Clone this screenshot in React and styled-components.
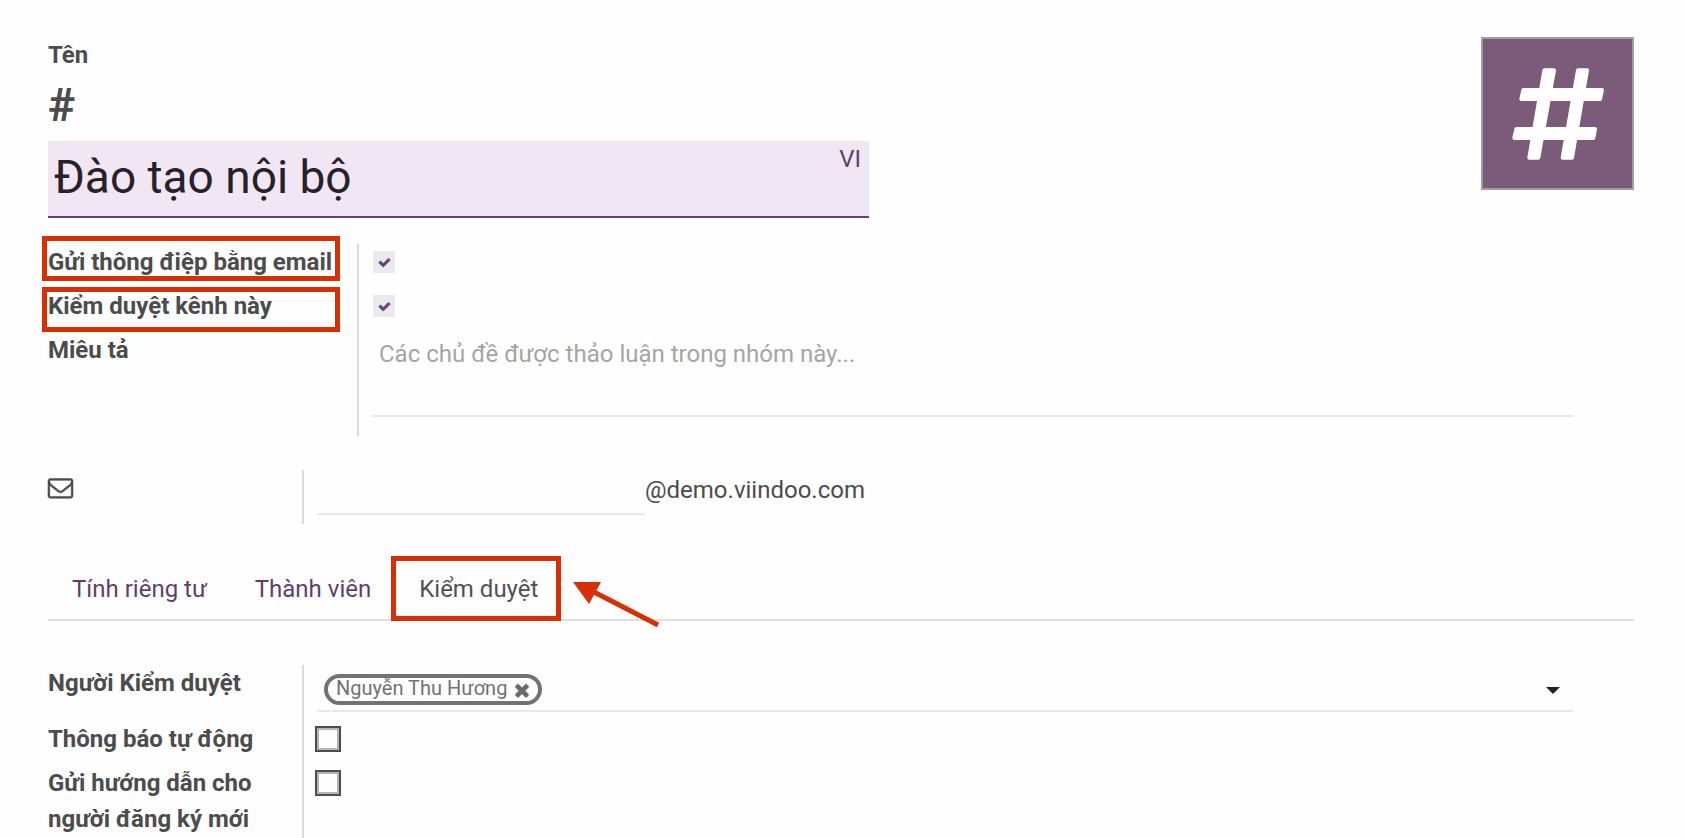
import React, { useState } from "react";
import styled, { createGlobalStyle, css } from "styled-components";

const GlobalStyle = createGlobalStyle`
  * {
    box-sizing: border-box;
  }
  body {
    margin: 0;
    background-color: #fefefe;
    color: #4c4c4c;
    font-family: Roboto, "Noto Sans", sans-serif;
    font-size: 24px;
    line-height: 36px;
  }
  input, textarea, button {
    font: inherit;
    color: inherit;
    border: none;
    border-radius: 0;
    background: none;
    padding: 0;
    margin: 0;
    outline: none;
  }
`;

const Page = styled.main`
  min-height: 100vh;
  padding: 37px 51px 0 48px;
  display: flex;
  flex-direction: column;
`;

const Header = styled.header`
  display: flex;
  justify-content: space-between;
  align-items: flex-start;
`;

const TitleBlock = styled.div`
  width: calc(50% + 28px);
  display: flex;
  flex-direction: column;
`;

const Label = styled.label`
  font-weight: bold;
`;

const Hash = styled.span`
  font-size: 46px;
  font-weight: bold;
  line-height: 64px;
  margin-bottom: 4px;
`;

const TitleField = styled.div`
  display: flex;
  align-items: flex-start;
  background-color: #f0e6f4;
  border-bottom: 2px solid #6b4079;
`;

const TitleInput = styled.input`
  flex: 1;
  min-width: 0;
  height: 75px;
  padding: 0 6px 4px;
  font-size: 46px;
  color: #262228;
`;

const LangButton = styled.button`
  padding: 0 8px;
  color: #5f3e6f;
  cursor: pointer;
`;

const Avatar = styled.svg`
  width: 153px;
  height: 153px;
  border: 2px solid #a09da2;
  background-color: #7c5a79;
`;

const Group = styled.section`
  display: grid;
  grid-template-columns: ${(props) => (props.$wide ? "309px" : "254px")} 1fr;
  margin-top: ${(props) => props.$top}px;
  ${(props) => props.$grow && css`flex: 1;`}
`;

const Labels = styled.div`
  display: flex;
  flex-direction: column;
  align-items: flex-start;
  gap: 8px;
  padding-right: 17px;
`;

const LabelCell = styled.div`
  position: relative;
  width: 100%;
  min-height: ${(props) => (props.$tall ? 48 : 36)}px;
`;

const Values = styled.div`
  display: flex;
  flex-direction: column;
  align-items: stretch;
  gap: 8px;
  border-left: 2px solid #dbdcde;
  padding: 0 61px 0 ${(props) => (props.$wide ? 14 : 13)}px;
`;

const Cell = styled.div`
  height: 36px;
  display: flex;
  align-items: center;
`;

/* red frames drawn over the form */
const Mark = styled.span`
  position: absolute;
  left: -6px;
  right: 0;
  top: ${(props) => props.$top}px;
  height: 45px;
  border: 5px solid #d92f05;
  pointer-events: none;
`;

const Tick = styled.span`
  position: relative;
  width: 22px;
  height: 22px;
  svg {
    position: absolute;
    left: 5px;
    top: 5px;
    width: 13px;
    height: 13px;
    fill: #68407a;
    stroke: #68407a;
    stroke-width: 80;
    pointer-events: none;
  }
`;

const TickInput = styled.input`
  appearance: none;
  display: block;
  width: 22px;
  height: 22px;
  background-color: #e9eaed;
  &:not(:checked) + svg {
    display: none;
  }
`;

const BoxInput = styled.input`
  appearance: none;
  width: 26px;
  height: 26px;
  margin-left: -2px;
  border: 2px solid #4d4d4d;
  box-shadow: inset 0 0 0 2px #b3b4b4;
  &:checked {
    background-color: #68407a;
  }
`;

const Description = styled.textarea`
  display: block;
  height: 85px;
  margin-bottom: 19px;
  padding: 4px 6px;
  border-bottom: 2px solid #e8e9ea;
  resize: none;
  &::placeholder {
    color: #a5a5a5;
    opacity: 1;
  }
`;

const MailIcon = styled.svg`
  display: block;
  width: 25px;
  height: 25px;
  margin-top: 5px;
  overflow: visible;
  fill: #4c4c4c;
  stroke: #4c4c4c;
  stroke-width: 40;
`;

const MailRow = styled.div`
  display: flex;
  align-items: flex-start;
  height: 54px;
  line-height: 40px;
`;

const AliasInput = styled.input`
  width: 328px;
  height: 45px;
  border-bottom: 2px solid #e8e9ea;
`;

const TabBar = styled.nav`
  display: flex;
  align-items: stretch;
  margin-top: 32px;
  border-bottom: 2px solid #dfe0e1;
`;

const Tab = styled.button`
  position: relative;
  padding: 15px 24px 12px;
  color: ${(props) => (props.$active ? "#4f5156" : "#5f3e6f")};
  cursor: pointer;
`;

const TabMark = styled.span`
  position: absolute;
  inset: 0 1px -2px -4px;
  border: 5px solid #d92f05;
  pointer-events: none;
`;

const Arrow = styled.svg`
  position: absolute;
  left: 100%;
  top: 20px;
  width: 110px;
  height: 56px;
  pointer-events: none;
`;

const TagField = styled.div`
  display: flex;
  align-items: center;
  height: 47px;
  margin-bottom: 1px;
  padding: 4px 13px 0 7px;
  border-bottom: 2px solid #e8e9ea;
`;

const Tag = styled.span`
  display: flex;
  align-items: center;
  gap: 8px;
  height: 31px;
  padding: 0 9px 0 8px;
  border: 4px solid #727272;
  border-radius: 16px;
  font-size: 20px;
  line-height: 20px;
  color: #727272;
  white-space: nowrap;
`;

const TagName = styled.span`
  padding-bottom: 3px;
`;

const RemoveButton = styled.button`
  display: flex;
  cursor: pointer;
  svg {
    width: 20px;
    height: 20px;
    margin: 0 -3px;
    fill: #6a6a6a;
    stroke: #6a6a6a;
    stroke-width: 50;
  }
`;

const TagInput = styled.input`
  flex: 1;
  min-width: 0;
`;

const CaretButton = styled.button`
  display: flex;
  padding-top: 2px;
  cursor: pointer;
`;

const CheckGlyph = () => (
  <svg viewBox="0 0 1792 1792" aria-hidden="true">
    <path d="M1671 566q0 40-28 68l-724 724-136 136q-28 28-68 28t-68-28l-136-136-362-362q-28-28-28-68t28-68l136-136q28-28 68-28t68 28l294 295 656-657q28-28 68-28t68 28l136 136q28 28 28 68z" />
  </svg>
);

const Toggle = ({ id }) => (
  <Cell>
    <Tick>
      <TickInput type="checkbox" id={id} defaultChecked />
      <CheckGlyph />
    </Tick>
  </Cell>
);

const tabs = ["Tính riêng tư", "Thành viên", "Kiểm duyệt"];

const App = () => {
  const [active, setActive] = useState(2);

  return (
    <Page>
      <GlobalStyle />
      <Header>
        <TitleBlock>
          <Label htmlFor="name">Tên</Label>
          <Hash>#</Hash>
          <TitleField>
            <TitleInput id="name" defaultValue="Đào tạo nội bộ" spellCheck={false} />
            <LangButton type="button">VI</LangButton>
          </TitleField>
        </TitleBlock>
        <Avatar viewBox="129 57 447 447" role="img" aria-label="#">
          <g fill="#fff" stroke="#fff" strokeWidth="12" strokeLinejoin="round">
            <path d="M313 151H342L295 413H268Z" />
            <path d="M414 151H441L396 413H368Z" />
            <path d="M250 210H486L480 237H244Z" />
            <path d="M229 327H465L460 354H223Z" />
          </g>
        </Avatar>
      </Header>

      <Group $wide $top={26}>
        <Labels>
          <LabelCell>
            <Label htmlFor="email_send">Gửi thông điệp bằng email</Label>
            <Mark $top={-8} />
          </LabelCell>
          <LabelCell>
            <Label htmlFor="moderation">Kiểm duyệt kênh này</Label>
            <Mark $top={-1} />
          </LabelCell>
          <LabelCell>
            <Label htmlFor="description">Miêu tả</Label>
          </LabelCell>
        </Labels>
        <Values $wide>
          <Toggle id="email_send" />
          <Toggle id="moderation" />
          <Description id="description" placeholder="Các chủ đề được thảo luận trong nhóm này..." />
        </Values>
      </Group>

      <Group $top={34}>
        <Labels>
          <label htmlFor="alias" aria-label="Email">
            <MailIcon viewBox="0 0 1792 1792" aria-hidden="true">
              <path d="M1664 1504v-768q-32 36-69 66-268 206-426 338-51 43-83 67t-86.5 48.5-102.5 24.5h-2q-48 0-102.5-24.5t-86.5-48.5-83-67q-158-132-426-338-37-30-69-66v768q0 13 9.5 22.5t22.5 9.5h1472q13 0 22.5-9.5t9.5-22.5zm0-1051v-24.5l-.5-13-3-12.5-5.5-9-9-7.5-14-2.5h-1472q-13 0-22.5 9.5t-9.5 22.5q0 168 147 284 193 152 401 317 6 5 35 29.5t46 37.5 44.5 31.5 50.5 27.5 43 9h2q20 0 43-9t50.5-27.5 44.5-31.5 46-37.5 35-29.5q208-165 401-317 54-43 100.5-115.5t46.5-131.5zm128-37v1088q0 66-47 113t-113 47h-1472q-66 0-113-47t-47-113v-1088q0-66 47-113t113-47h1472q66 0 113 47t47 113z" />
            </MailIcon>
          </label>
        </Labels>
        <Values>
          <MailRow>
            <AliasInput id="alias" />
            <span>@demo.viindoo.com</span>
          </MailRow>
        </Values>
      </Group>

      <TabBar>
        {tabs.map((name, i) => (
          <Tab key={name} type="button" $active={active === i} onClick={() => setActive(i)}>
            {name}
            {i === 2 && (
              <>
                <TabMark />
                <Arrow viewBox="0 0 110 56" aria-hidden="true">
                  <path d="M11 6H39L27 28Z" fill="#d92f05" />
                  <path d="M30 15L96 49" stroke="#d92f05" strokeWidth="5" />
                </Arrow>
              </>
            )}
          </Tab>
        ))}
      </TabBar>

      <Group $top={44} $grow>
        <Labels>
          <LabelCell $tall>
            <Label htmlFor="moderators">Người Kiểm duyệt</Label>
          </LabelCell>
          <LabelCell>
            <Label htmlFor="notify">Thông báo tự động</Label>
          </LabelCell>
          <LabelCell>
            <Label htmlFor="guidelines">Gửi hướng dẫn cho người đăng ký mới</Label>
          </LabelCell>
        </Labels>
        <Values>
          <TagField>
            <Tag>
              <TagName>Nguyễn Thu Hương</TagName>
              <RemoveButton type="button" aria-label="Xóa">
                <svg viewBox="0 0 1792 1792" aria-hidden="true">
                  <path d="M1490 1322q0 40-28 68l-136 136q-28 28-68 28t-68-28l-294-294-294 294q-28 28-68 28t-68-28l-136-136q-28-28-28-68t28-68l294-294-294-294q-28-28-28-68t28-68l136-136q28-28 68-28t68 28l294 294 294-294q28-28 68-28t68 28l136 136q28 28 28 68t-28 68l-294 294 294 294q28 28 28 68z" />
                </svg>
              </RemoveButton>
            </Tag>
            <TagInput id="moderators" />
            <CaretButton type="button" aria-label="Mở danh sách">
              <svg width="14" height="7" viewBox="0 0 14 7" aria-hidden="true">
                <path d="M0 0H14L7 7Z" fill="#212121" />
              </svg>
            </CaretButton>
          </TagField>
          <Cell>
            <BoxInput type="checkbox" id="notify" />
          </Cell>
          <Cell>
            <BoxInput type="checkbox" id="guidelines" />
          </Cell>
        </Values>
      </Group>
    </Page>
  );
};

export default App;
